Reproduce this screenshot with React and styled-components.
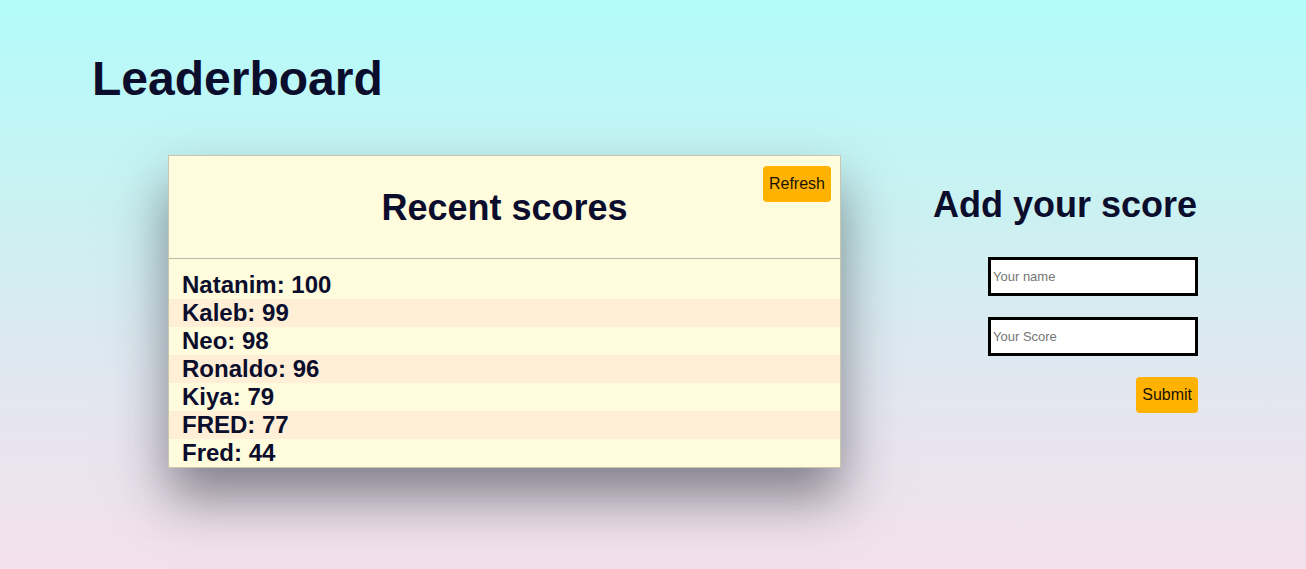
import React from "react";
import styled, { createGlobalStyle } from "styled-components";

const Global = createGlobalStyle`
  html, body { margin: 0; padding: 0; }
  body {
    min-height: 569px;
    font-family: "Liberation Sans", Arial, sans-serif;
    background: linear-gradient(180deg, #b3fcfb 0%, #cdf0f1 40%, #e4e6f0 70%, #f3e1ec 100%);
    color: #0b0d2c;
  }
`;

const Page = styled.div`
  padding: 50px 109px 0 92px;
`;

const Title = styled.h1`
  margin: 0;
  font-size: 48px;
  font-weight: 700;
  line-height: 58px;
  color: #0b0d2c;
`;

const Main = styled.div`
  display: flex;
  justify-content: space-between;
  align-items: flex-start;
  margin-top: 47px;
  padding-left: 76px;
`;

const Card = styled.section`
  position: relative;
  width: 673px;
  box-sizing: border-box;
  background: #fffcdd;
  border: 1px solid #c9c7b2;
  box-shadow: 0 30px 50px rgba(30, 30, 40, 0.5);
`;

const CardHeader = styled.header`
  height: 102px;
  border-bottom: 1px solid #b9b8aa;
  display: flex;
  align-items: center;
  justify-content: center;
`;

const CardTitle = styled.h2`
  margin: 0;
  padding-top: 1px;
  font-size: 36px;
  font-weight: 700;
  color: #0b0d2c;
`;

const Button = styled.button`
  font-family: "Liberation Sans", Arial, sans-serif;
  font-size: 16px;
  color: #1a1200;
  background: #ffb300;
  border: none;
  border-radius: 4px;
  height: 36px;
  padding: 0 6px;
  cursor: pointer;
`;

const RefreshButton = styled(Button)`
  position: absolute;
  top: 10px;
  right: 9px;
`;

const List = styled.ul`
  list-style: none;
  margin: 0;
  padding: 12px 0 0;
`;

const Row = styled.li`
  height: 28px;
  line-height: 28px;
  padding: 0 0 0 13px;
  font-size: 24px;
  font-weight: 700;
  color: #0b0d2c;
  background: ${(p) => (p.$alt ? "#ffefd6" : "transparent")};
`;

const FormColumn = styled.form`
  display: flex;
  flex-direction: column;
  align-items: flex-end;
  padding-top: 28px;
`;

const FormTitle = styled.h2`
  margin: 0 0 30px;
  font-size: 36px;
  font-weight: 700;
  line-height: 44px;
  color: #0b0d2c;
`;

const Input = styled.input`
  box-sizing: border-box;
  width: 210px;
  height: 39px;
  border: 3px solid #000;
  background: #fff;
  padding: 0 2px;
  margin: 0 -1px 21px 0;
  font-family: "Liberation Sans", Arial, sans-serif;
  font-size: 13px;
  outline: none;
  &::placeholder { color: #757575; }
`;

const SubmitButton = styled(Button)`
  margin-right: -1px;
`;

const scores = [
  ["Natanim", 100],
  ["Kaleb", 99],
  ["Neo", 98],
  ["Ronaldo", 96],
  ["Kiya", 79],
  ["FRED", 77],
  ["Fred", 44],
];

export default function App() {
  return (
    <>
      <Global />
      <Page>
        <Title>Leaderboard</Title>
        <Main>
          <Card>
            <CardHeader>
              <CardTitle>Recent scores</CardTitle>
            </CardHeader>
            <RefreshButton type="button">Refresh</RefreshButton>
            <List>
              {scores.map(([n, s], i) => (
                <Row key={i} $alt={i % 2 === 1}>
                  {n}: {s}
                </Row>
              ))}
            </List>
          </Card>
          <FormColumn onSubmit={(e) => e.preventDefault()}>
            <FormTitle>Add your score</FormTitle>
            <Input placeholder="Your name" />
            <Input placeholder="Your Score" />
            <SubmitButton type="submit">Submit</SubmitButton>
          </FormColumn>
        </Main>
      </Page>
    </>
  );
}
